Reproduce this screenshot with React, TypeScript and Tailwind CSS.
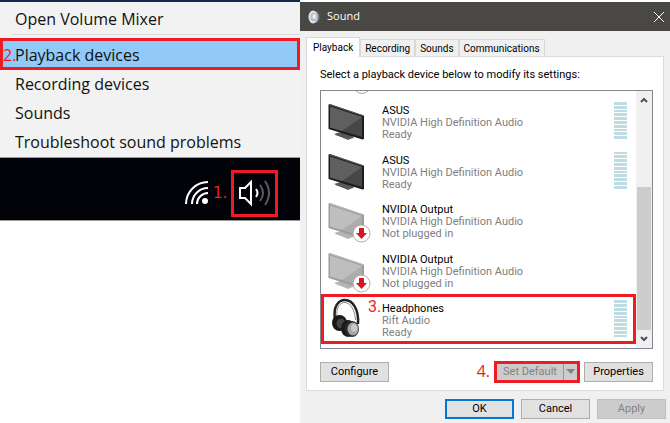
import { useState } from 'react'
import clsx from 'clsx'

type IconName = 'tv' | 'tvOff' | 'headphones'

interface Device {
  id: string
  name: string
  driver: string
  status: string
  icon: IconName
  meter?: boolean
  step?: string
}

const menuItems = ['Recording devices', 'Sounds', 'Troubleshoot sound problems']

const tabs = ['Playback', 'Recording', 'Sounds', 'Communications']

const devices: Device[] = [
  { id: 'asus-1', name: 'ASUS', driver: 'NVIDIA High Definition Audio', status: 'Ready', icon: 'tv', meter: true },
  { id: 'asus-2', name: 'ASUS', driver: 'NVIDIA High Definition Audio', status: 'Ready', icon: 'tv', meter: true },
  { id: 'nv-1', name: 'NVIDIA Output', driver: 'NVIDIA High Definition Audio', status: 'Not plugged in', icon: 'tvOff' },
  { id: 'nv-2', name: 'NVIDIA Output', driver: 'NVIDIA High Definition Audio', status: 'Not plugged in', icon: 'tvOff' },
  { id: 'rift', name: 'Headphones', driver: 'Rift Audio', status: 'Ready', icon: 'headphones', meter: true, step: '3.' }
]

function TvIcon({ off = false }: { off?: boolean }) {
  return (
    <svg width="44" height="44" viewBox="0 0 44 44" aria-hidden="true">
      <path d="M14 32 L24 35 L26 38 L20 39 L7 35 Z" fill={off ? '#c4c4c4' : '#6c7072'} />
      <path d="M6 34 L13 32 L26 37 L20 40 Z" fill={off ? '#b4b4b4' : '#55595b'} />
      <path d="M0.500 4.500 L2 4 L36 15.500 L36 39 L34.500 39.500 L0.500 29 Z" fill={off ? '#9c9c9c' : '#1c1c1c'} />
      <path d="M2 6.500 L34 17 L34 37 L2 27.500 Z" fill={off ? '#acacac' : '#474747'} />
      <path d="M2 6.500 L34 17 L14 31 L2 27.500 Z" fill={off ? '#bebebe' : '#5f5f5f'} />
      <path d="M1 4.500 L36 16" stroke={off ? '#c8c8c8' : '#7b7b7b'} strokeWidth="0.700" />
      {off && (
        <>
          <circle cx="33.500" cy="34.500" r="8.500" fill="#fff" stroke="#b0a8a8" />
          <path d="M31 29h5v5h3l-5.500 6L28 34h3z" fill="#d9141e" />
        </>
      )}
    </svg>
  )
}

function HeadphonesIcon() {
  return (
    <svg width="44" height="44" viewBox="0 0 44 44" aria-hidden="true">
      <path d="M7 21 C5 9 10 2 17 2 C25 2 31 12 30 26" fill="none" stroke="#222" strokeWidth="2.500" />
      <path d="M9 19 C8 9 12 4.500 17 4.500 C22 4.500 27 12 27.500 22" fill="none" stroke="#8a8a8a" strokeWidth="1" />
      <ellipse cx="11.500" cy="25" rx="7.500" ry="8" fill="#171717" />
      <ellipse cx="13" cy="25.500" rx="4.500" ry="5" fill="#444" />
      <ellipse cx="20" cy="30.500" rx="7" ry="8.500" fill="#1a1a1a" />
      <ellipse cx="24" cy="31" rx="7" ry="8" fill="#2b2b2b" />
      <ellipse cx="25" cy="31" rx="5.500" ry="6.500" fill="#a3a5a7" />
      <ellipse cx="26" cy="30" rx="3" ry="4" fill="#c6c8ca" />
    </svg>
  )
}

function LevelMeter() {
  return (
    <div className="flex h-[37px] w-[13px] flex-col gap-px">
      {Array.from({ length: 10 }, (_, i) => (
        <span key={i} className="flex-1 bg-[#bfdce2]" />
      ))}
    </div>
  )
}

function DeviceRow({ device }: { device: Device }) {
  return (
    <li
      className={clsx(
        'relative flex min-h-0 flex-1 items-start border-3 pr-1.5',
        device.step ? 'border-[#ed1c24]' : 'border-transparent'
      )}
    >
      <div className="w-[58px] shrink-0 pt-px pl-1">
        {device.icon === 'headphones' ? <HeadphonesIcon /> : <TvIcon off={device.icon === 'tvOff'} />}
      </div>
      {device.step && <span className="absolute top-0 left-11 text-base leading-5 text-[#ed1c24]">{device.step}</span>}
      <div className="flex-1 pt-1.5 font-['Roboto'] text-[11px] leading-3 text-[#808080]">
        <p className="text-black">{device.name}</p>
        <p>{device.driver}</p>
        <p>{device.status}</p>
      </div>
      {device.meter && (
        <div className="pt-[3px]">
          <LevelMeter />
        </div>
      )}
    </li>
  )
}

function VolumeMenu() {
  return (
    <nav className="border-t-2 border-b border-t-[#14284b] border-b-[#999] bg-[#f2f2f2] text-base text-[#111]">
      <button type="button" className="block h-8 w-full pl-[15px] text-left leading-[34px]">
        Open Volume Mixer
      </button>
      <hr className="mb-[3px] ml-3 border-[#d9dcdf]" />
      <button
        type="button"
        className="relative block h-8 w-full border-3 border-[#ed1c24] bg-[#91c9f7] pl-3 text-left leading-7"
      >
        <span className="absolute left-0 text-[#ed1c24]">2.</span>
        Playback devices
      </button>
      {menuItems.map((item) => (
        <button key={item} type="button" className="block h-[29px] w-full pb-0.5 pl-[15px] text-left leading-6">
          {item}
        </button>
      ))}
    </nav>
  )
}

function Taskbar() {
  return (
    <div className="flex h-[63px] items-center justify-end border-b border-[#999] bg-[#020308] pt-2 pr-[22px]">
      <svg width="24" height="24" viewBox="0 0 24 24" fill="none" stroke="#fff" strokeWidth="2" aria-hidden="true">
        <path d="M1 23A22 22 0 0 1 23 1M7 23A16 16 0 0 1 23 7M12 23A11 11 0 0 1 23 12" />
        <circle cx="20" cy="20" r="3" fill="#fff" stroke="none" />
      </svg>
      <span className="w-[22px] pl-1 font-['DejaVu_Sans'] text-[15px] text-[#ed1c24]">1.</span>
      <button
        type="button"
        aria-label="Volume"
        className="flex h-[47px] w-[47px] items-center justify-center border-3 border-[#ed1c24]"
      >
        <svg width="32" height="28" viewBox="0 0 32 28" fill="none" aria-hidden="true">
          <path d="M1 9H6L12 3V25L6 19H1Z" stroke="#fff" strokeWidth="2" />
          <path d="M17 10Q20 14 17 18" stroke="#fff" strokeWidth="2" />
          <path d="M21 6Q27 14 21 22M26 2Q34 14 26 26" stroke="#5a5a5e" strokeWidth="2" />
        </svg>
      </button>
    </div>
  )
}

function SoundDialog() {
  const [active, setActive] = useState('Playback')
  const grayButton = 'h-5 w-[69px] border border-[#adadad] bg-[#e1e1e1] leading-4'

  return (
    <section className="mt-0.5 flex min-w-0 flex-1 flex-col bg-[#f0f0f0] text-[11px] text-black">
      <header className="flex h-[29px] items-center bg-[#4a4845] pr-1.5 pl-2 text-white">
        <svg width="12" height="14" viewBox="0 0 12 14" aria-hidden="true">
          <ellipse cx="7" cy="7" rx="4.500" ry="6" fill="#7d858b" />
          <ellipse cx="5" cy="7" rx="4.500" ry="6.500" fill="#dfe6ea" />
          <ellipse cx="5.500" cy="7" rx="3" ry="4.500" fill="#b4c0c8" />
          <ellipse cx="6" cy="6.500" rx="1.500" ry="2.500" fill="#eef3f5" />
        </svg>
        <h1 className="flex-1 pl-[7px] text-[11px]">Sound</h1>
        <button type="button" aria-label="Close">
          <svg width="10" height="10" viewBox="0 0 10 10" stroke="#fff" aria-hidden="true">
            <path d="M0 0L10 10M10 0L0 10" />
          </svg>
        </button>
      </header>

      <div className="flex flex-col px-1.5 pt-1.5 font-['Roboto']">
        <div role="tablist" className="flex items-end text-[10px]">
          {tabs.map((tab) => (
            <button
              key={tab}
              type="button"
              role="tab"
              aria-selected={tab === active}
              onClick={() => setActive(tab)}
              className={clsx(
                'border border-b-0 border-[#d9d9d9]',
                tab === active ? 'z-10 -mb-px h-5 bg-white px-1.5' : 'h-[17px] bg-[#f0f0f0] px-1'
              )}
            >
              {tab}
            </button>
          ))}
        </div>

        <div className="border border-[#dcdcdc] bg-white pt-2.5 pr-2.5 pb-[7px] pl-[13px]">
          <p className="leading-4">Select a playback device below to modify its settings:</p>
          <div className="mt-[7px] flex h-[259px] border border-[#828790]">
            <ul className="flex min-w-0 flex-1 flex-col pb-1">
              <li className="h-[5px] overflow-hidden pl-[33px]">
                <svg width="16" height="4" viewBox="0 0 16 4" fill="none" aria-hidden="true">
                  <path d="M2 0Q8 5 14 0" stroke="#aaa" strokeWidth="1" />
                </svg>
              </li>
              {devices.map((device) => (
                <DeviceRow key={device.id} device={device} />
              ))}
            </ul>
            <div className="flex w-4 flex-col items-center bg-[#f0f0f0] py-1.5">
              <svg width="8" height="6" viewBox="0 0 8 6" fill="none" stroke="#505050" strokeWidth="2" aria-hidden="true">
                <path d="M1 5L4 2L7 5" />
              </svg>
              <span className="mt-[84px] mb-1.5 w-3.5 flex-1 bg-[#cdcdcd]" />
              <svg width="8" height="6" viewBox="0 0 8 6" fill="none" stroke="#505050" strokeWidth="2" aria-hidden="true">
                <path d="M1 1L4 4L7 1" />
              </svg>
            </div>
          </div>

          <div className="mt-3 flex items-center">
            <button type="button" className={grayButton}>
              Configure
            </button>
            <span className="ml-auto pr-1 pb-0.5 font-['Open_Sans'] text-base leading-5 text-[#ed1c24]">4.</span>
            <div className="mr-1 flex h-[22px] w-[86px] border-3 border-[#ed1c24] bg-[#ccc] leading-4 text-[#838383]">
              <button type="button" disabled className="flex-1">
                Set Default
              </button>
              <button type="button" disabled aria-label="More defaults" className="w-3.5 border-l border-[#999] pl-0.5">
                <svg width="9" height="6" viewBox="0 0 9 6" aria-hidden="true">
                  <path d="M0 0H9L5 5Z" fill="#838383" />
                </svg>
              </button>
            </div>
            <button type="button" className={grayButton}>
              Properties
            </button>
          </div>
        </div>
      </div>

      <footer className="flex justify-end gap-[7px] px-1 py-2 font-['Roboto']">
        <button type="button" className="h-5 w-[69px] border-2 border-[#0078d7] bg-[#e1e1e1] leading-4">
          OK
        </button>
        <button type="button" className={grayButton}>
          Cancel
        </button>
        <button type="button" disabled className="h-5 w-[69px] border border-[#bfbfbf] bg-[#ccc] leading-4 text-[#838383]">
          Apply
        </button>
      </footer>
    </section>
  )
}

export default function App() {
  return (
    <main className="flex min-h-screen bg-white font-['Open_Sans',sans-serif]">
      <div className="w-[300px] shrink-0">
        <VolumeMenu />
        <Taskbar />
      </div>
      <SoundDialog />
    </main>
  )
}
